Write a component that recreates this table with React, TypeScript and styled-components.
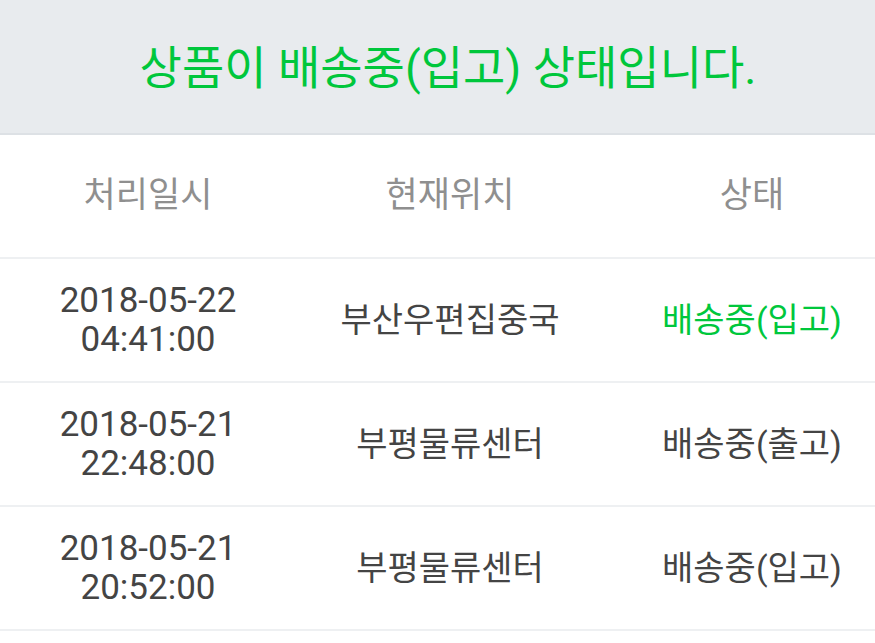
import React from "react";
import styled, { createGlobalStyle } from "styled-components";

const Global = createGlobalStyle`
  html, body { margin: 0; padding: 0; background: #ffffff; }
  body { font-family: Roboto, "Noto Sans CJK KR", sans-serif; }
`;

const Page = styled.div`
  width: 875px;
  background: #ffffff;
`;

const Banner = styled.div`
  height: 127px;
  padding: 0 0 6px 21px;
  background: #e8ebee;
  border-bottom: 2px solid #dde1e5;
  display: flex;
  align-items: center;
  justify-content: center;
  color: #00c73c;
  font-size: 46px;
`;

const Row = styled.div<{ $head?: boolean }>`
  display: grid;
  grid-template-columns: 296px 308px 1fr;
  height: 122px;
  border-bottom: 2px solid #eef0f2;
  align-items: center;
  color: ${(p) => (p.$head ? "#8f8f8f" : "#444444")};
  font-size: ${(p) => (p.$head ? "35px" : "34px")};
`;

const Cell = styled.div<{ $status?: boolean; $active?: boolean }>`
  text-align: center;
  padding-left: ${(p) => (p.$status ? "25px" : "0")};
  color: ${(p) => (p.$active ? "#00c73c" : "inherit")};
  line-height: 40px;
`;

const DateCell = styled(Cell)`
  font-size: 35px;
  line-height: 39px;
`;

const rows = [
  { d: "2018-05-22", t: "04:41:00", loc: "부산우편집중국", st: "배송중(입고)", active: true },
  { d: "2018-05-21", t: "22:48:00", loc: "부평물류센터", st: "배송중(출고)", active: false },
  { d: "2018-05-21", t: "20:52:00", loc: "부평물류센터", st: "배송중(입고)", active: false },
];

export default function App() {
  return (
    <Page>
      <Global />
      <Banner>상품이 배송중(입고) 상태입니다.</Banner>
      <Row $head>
        <Cell>처리일시</Cell>
        <Cell>현재위치</Cell>
        <Cell $status>상태</Cell>
      </Row>
      {rows.map((r, i) => (
        <Row key={i}>
          <DateCell>
            {r.d}
            <br />
            {r.t}
          </DateCell>
          <Cell>{r.loc}</Cell>
          <Cell $status $active={r.active}>
            {r.st}
          </Cell>
        </Row>
      ))}
    </Page>
  );
}
